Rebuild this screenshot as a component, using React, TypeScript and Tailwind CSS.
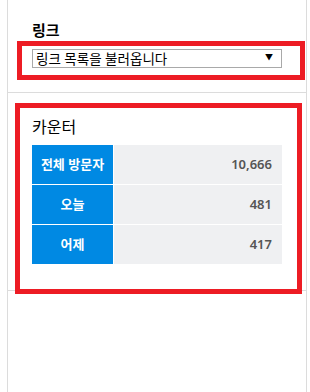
const counters = [
  { label: "전체 방문자", value: "10,666" },
  { label: "오늘", value: "481" },
  { label: "어제", value: "417" },
];

export default function App() {
  return (
    <div
      className="min-h-[392px] bg-white text-black"
      style={{ fontFamily: '"Noto Sans", "Noto Sans CJK KR", sans-serif' }}
    >
      <div className="ml-[7px] w-[300px] min-h-[392px] border-x border-[#dcdcdc]">
        {/* 링크 */}
        <section className="pb-[12px] border-b border-[#dcdcdc]">
          <h2 className="pl-[24px] pt-[20px] text-[15px] leading-[20px] font-semibold">링크</h2>
          <div className="mt-[1px] ml-[9px] w-[288px] h-[39px] border-[5px] border-[#ed1c24] pl-[10px] pt-[3px]">
            <div className="w-[250px] h-[19px] border border-[#a9a9a9] flex items-center justify-between pl-[3px] pr-[8px]">
              <span className="text-[13.5px] leading-[17px] pt-[2px]">링크 목록을 불러옵니다</span>
              <span className="text-[8px] leading-none pb-[3px]">▼</span>
            </div>
          </div>
        </section>

        {/* 카운터 */}
        <section className="pt-[10px] border-b border-[#dcdcdc]">
          <div className="relative ml-[7px] w-[287px] h-[191px] -mb-[4px] border-[5px] border-[#ed1c24] pl-[12px] pt-[8px]">
            <h2 className="text-[16px] leading-[22px] font-normal">카운터</h2>
            <div className="mt-[7px] w-[250px] grid grid-cols-[81px_168px] gap-px bg-white">
              {counters.map((c) => (
                <div key={c.label} className="contents">
                  <div className="h-[39px] bg-[#0089e3] text-white text-[13px] font-bold flex items-center justify-center">
                    {c.label}
                  </div>
                  <div className="h-[39px] bg-[#eff0f2] text-[#555] text-[13px] font-semibold flex items-center justify-end pr-[10px]">
                    {c.value}
                  </div>
                </div>
              ))}
            </div>
          </div>
        </section>
      </div>
    </div>
  );
}
